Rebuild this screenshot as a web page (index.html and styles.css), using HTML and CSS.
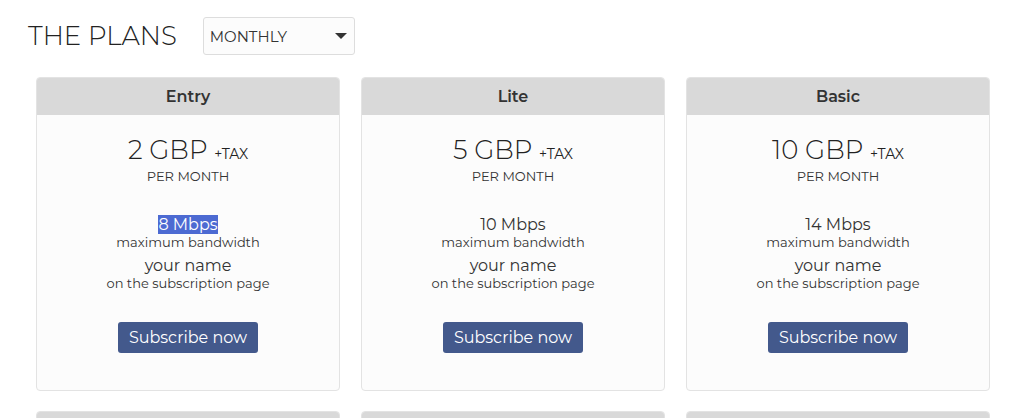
FILE: index.html
```html
<!DOCTYPE html>
<html lang="en">
<head>
    <meta charset="UTF-8">
    <meta name="viewport" content="width=device-width, initial-scale=1.0">
    <title>The Plans</title>
    <link rel="stylesheet" href="styles.css">
</head>
<body>
    <div class="page">
        <div class="plans-head">
            <h1>THE PLANS</h1>
            <div class="period-select">
                <span>MONTHLY</span>
                <span class="caret"></span>
            </div>
        </div>

        <div class="plans">
            <div class="plan">
                <div class="plan-title">Entry</div>
                <div class="plan-body">
                    <div class="price">2 GBP <small>+TAX</small></div>
                    <div class="per">PER MONTH</div>
                    <div class="feature"><span class="selected">8 Mbps</span></div>
                    <div class="feature-note">maximum bandwidth</div>
                    <div class="feature">your name</div>
                    <div class="feature-note">on the subscription page</div>
                    <button class="subscribe">Subscribe now</button>
                </div>
            </div>
            <div class="plan">
                <div class="plan-title">Lite</div>
                <div class="plan-body">
                    <div class="price">5 GBP <small>+TAX</small></div>
                    <div class="per">PER MONTH</div>
                    <div class="feature">10 Mbps</div>
                    <div class="feature-note">maximum bandwidth</div>
                    <div class="feature">your name</div>
                    <div class="feature-note">on the subscription page</div>
                    <button class="subscribe">Subscribe now</button>
                </div>
            </div>
            <div class="plan">
                <div class="plan-title">Basic</div>
                <div class="plan-body">
                    <div class="price">10 GBP <small>+TAX</small></div>
                    <div class="per">PER MONTH</div>
                    <div class="feature">14 Mbps</div>
                    <div class="feature-note">maximum bandwidth</div>
                    <div class="feature">your name</div>
                    <div class="feature-note">on the subscription page</div>
                    <button class="subscribe">Subscribe now</button>
                </div>
            </div>
            <div class="plan">
                <div class="plan-title">Standard</div>
            </div>
            <div class="plan">
                <div class="plan-title">Plus</div>
            </div>
            <div class="plan">
                <div class="plan-title">Pro</div>
            </div>
        </div>
    </div>
</body>
</html>
```

FILE: styles.css
```css
body {
    margin: 0;
    padding: 0;
    background: #ffffff;
    color: #333333;
    font-family: Montserrat, 'DejaVu Sans', sans-serif;
}

.page {
    padding: 17px 33px 0 28px;
}

.plans-head {
    display: flex;
    align-items: center;
    gap: 26px;
}

.plans-head h1 {
    margin: 0;
    font-size: 26px;
    font-weight: 300;
    color: #222222;
}

.period-select {
    width: 152px;
    height: 38px;
    box-sizing: border-box;
    border: 1px solid #dddddd;
    border-radius: 3px;
    background: #fcfcfc;
    display: flex;
    align-items: center;
    justify-content: space-between;
    padding: 0 7px 0 6px;
    font-size: 15px;
    color: #333333;
}

.period-select .caret {
    width: 0;
    height: 0;
    border-left: 6px solid transparent;
    border-right: 6px solid transparent;
    border-top: 6px solid #333333;
}

.plans {
    display: grid;
    grid-template-columns: repeat(3, 304px);
    column-gap: 21px;
    row-gap: 20px;
    margin: 22px 0 0 8px;
}

.plan {
    border: 1px solid #e3e3e3;
    border-radius: 4px;
    background: #fcfcfc;
    overflow: hidden;
    height: 314px;
    box-sizing: border-box;
}

.plan-title {
    background: #d9d9d9;
    height: 37px;
    line-height: 38px;
    text-align: center;
    font-size: 16px;
    font-weight: 600;
    color: #333333;
}

.plan-body {
    display: flex;
    flex-direction: column;
    align-items: center;
    padding-top: 20px;
    text-align: center;
}

.price {
    font-size: 26px;
    font-weight: 300;
    line-height: 30px;
    color: #222222;
}

.price small {
    font-size: 14px;
    font-weight: 400;
}

.per {
    font-size: 13px;
    line-height: 14px;
    margin-bottom: 32px;
}

.feature {
    font-size: 16px;
    line-height: 19px;
}

.feature-note {
    font-size: 13px;
    line-height: 16px;
    margin-bottom: 6px;
}

.selected {
    background: #4c6ad2;
    color: #ffffff;
}

.subscribe {
    margin-top: 25px;
    height: 31px;
    padding: 0 11px;
    border: none;
    border-radius: 3px;
    background: #43598c;
    color: #ffffff;
    font-family: inherit;
    font-size: 16px;
}
```
